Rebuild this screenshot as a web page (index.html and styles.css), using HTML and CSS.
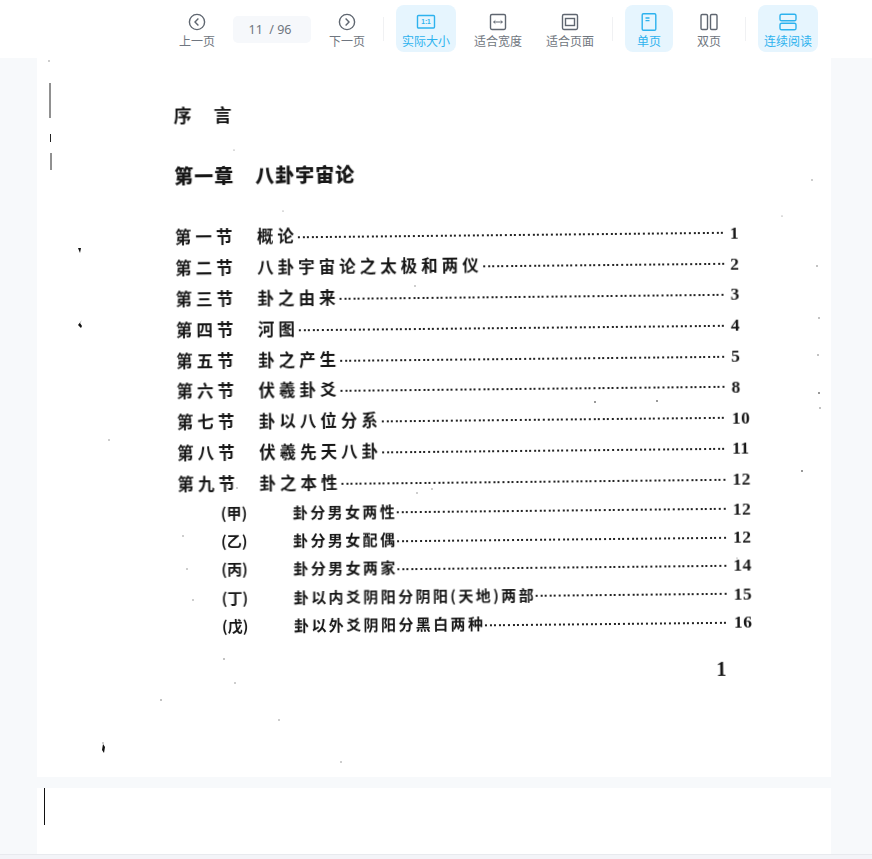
FILE: index.html
```html
<!DOCTYPE html>
<html lang="zh-CN">
<head>
<meta charset="utf-8">
<title>阅读器</title>
<link rel="stylesheet" href="styles.css">
</head>
<body>
<header class="toolbar">
  <button class="tool prev">
    <svg class="icon" viewBox="0 0 20 20"><circle cx="10" cy="10" r="7.6"/><path d="M11.4 6.6 8 10l3.4 3.4"/></svg>
    <span>上一页</span>
  </button>
  <div class="pager">11 &nbsp;/ 96</div>
  <button class="tool next">
    <svg class="icon" viewBox="0 0 20 20"><circle cx="10" cy="10" r="7.6"/><path d="M8.6 6.6 12 10l-3.4 3.4"/></svg>
    <span>下一页</span>
  </button>
  <i class="divider"></i>
  <button class="tool active">
    <svg class="icon" viewBox="0 0 20 20"><rect x="1.5" y="3.5" width="17" height="12.5" rx="1"/><text x="10" y="12.4" class="ratio">1:1</text></svg>
    <span>实际大小</span>
  </button>
  <button class="tool">
    <svg class="icon" viewBox="0 0 20 20"><rect x="2.5" y="2.5" width="15" height="15" rx="1.4"/><path class="thin" d="M5.5 10h9M7.3 8.5 5.7 10l1.6 1.5M12.7 8.5l1.6 1.5-1.6 1.5"/></svg>
    <span>适合宽度</span>
  </button>
  <button class="tool">
    <svg class="icon" viewBox="0 0 20 20"><rect x="2.5" y="2.5" width="15" height="15" rx="1.4"/><rect x="5.5" y="6.5" width="9" height="7"/></svg>
    <span>适合页面</span>
  </button>
  <i class="divider"></i>
  <button class="tool narrow active">
    <svg class="icon" viewBox="0 0 20 20"><rect x="3.2" y="1.8" width="13.6" height="16.4" rx="1.2"/><path d="M6.5 6h4M6.5 8.6h4"/></svg>
    <span>单页</span>
  </button>
  <button class="tool narrow">
    <svg class="icon" viewBox="0 0 20 20"><rect x="2" y="2.5" width="6.5" height="15" rx="1.2"/><rect x="11.5" y="2.5" width="6.5" height="15" rx="1.2"/></svg>
    <span>双页</span>
  </button>
  <i class="divider"></i>
  <button class="tool active">
    <svg class="icon" viewBox="0 0 20 20"><rect x="2" y="2.2" width="16" height="6.6" rx="1.6"/><rect x="2" y="11.2" width="16" height="6.6" rx="1.6"/></svg>
    <span>连续阅读</span>
  </button>
</header>

<main class="viewer">
  <section class="page first">
    <div class="scan">
      <h2 class="preface">序<span class="gap"></span>言</h2>
      <h1 class="chapter"><span class="chapter-no">第一章</span>八卦宇宙论</h1>
      <ol class="sections">
        <li><span class="no">第一节</span><span class="name">概论</span><span class="leader"></span><span class="num">1</span></li>
        <li><span class="no">第二节</span><span class="name">八卦宇宙论之太极和两仪</span><span class="leader"></span><span class="num">2</span></li>
        <li><span class="no">第三节</span><span class="name">卦之由来</span><span class="leader"></span><span class="num">3</span></li>
        <li><span class="no">第四节</span><span class="name">河图</span><span class="leader"></span><span class="num">4</span></li>
        <li><span class="no">第五节</span><span class="name">卦之产生</span><span class="leader"></span><span class="num">5</span></li>
        <li><span class="no">第六节</span><span class="name">伏羲卦爻</span><span class="leader"></span><span class="num">8</span></li>
        <li><span class="no">第七节</span><span class="name">卦以八位分系</span><span class="leader"></span><span class="num">10</span></li>
        <li><span class="no">第八节</span><span class="name">伏羲先天八卦</span><span class="leader"></span><span class="num">11</span></li>
        <li><span class="no">第九节</span><span class="name">卦之本性</span><span class="leader"></span><span class="num">12</span></li>
      </ol>
      <ol class="subsections">
        <li><span class="no">(甲)</span><span class="name">卦分男女两性</span><span class="leader"></span><span class="num">12</span></li>
        <li><span class="no">(乙)</span><span class="name">卦分男女配偶</span><span class="leader"></span><span class="num">12</span></li>
        <li><span class="no">(丙)</span><span class="name">卦分男女两家</span><span class="leader"></span><span class="num">14</span></li>
        <li><span class="no">(丁)</span><span class="name">卦以内爻阴阳分阴阳(天地)两部</span><span class="leader"></span><span class="num">15</span></li>
        <li><span class="no">(戊)</span><span class="name">卦以外爻阴阳分黑白两种</span><span class="leader"></span><span class="num">16</span></li>
      </ol>
      <p class="folio">1</p>
    </div>
    <svg class="specks" viewBox="0 0 794 719">
      <path class="rule" d="M13 25V45M13 45V60M13.5 76V84M14 95V112"/>
      <path class="blot" d="M41 190l3 0-1 5zM45 262l-2 3 2 3-1 2-3-3zM66 686l2 3-1 6-2-3z"/>
      <g class="dust">
        <circle cx="12" cy="3" r=".7"/><circle cx="197" cy="92" r=".6"/><circle cx="246" cy="153" r=".6"/>
        <circle cx="775" cy="122" r=".7"/><circle cx="745" cy="158" r=".6"/><circle cx="780" cy="208" r=".8"/>
        <circle cx="782" cy="260" r=".8"/><circle cx="781" cy="297" r=".8"/><circle cx="782" cy="335" r="1"/>
        <circle cx="783" cy="350" r=".8"/><circle cx="558" cy="344" r="1"/><circle cx="620" cy="343" r="1"/>
        <circle cx="765" cy="413" r="1"/><circle cx="72" cy="382" r=".7"/><circle cx="146" cy="478" r=".7"/>
        <circle cx="156" cy="542" r=".7"/><circle cx="187" cy="601" r=".8"/><circle cx="198" cy="625" r=".7"/>
        <circle cx="124" cy="642" r=".8"/><circle cx="242" cy="662" r=".7"/><circle cx="304" cy="704" r=".7"/>
        <circle cx="66" cy="685" r=".7"/><circle cx="380" cy="435" r=".7"/><circle cx="395" cy="431" r=".7"/>
        <circle cx="378" cy="228" r=".7"/><circle cx="190" cy="427" r=".8"/><circle cx="200" cy="430" r=".7"/>
        <circle cx="150" cy="511" r=".7"/><circle cx="700" cy="500" r=".6"/>
      </g>
    </svg>
  </section>
  <section class="page second">
    <i class="margin-line"></i>
  </section>
</main>
<footer class="statusbar"></footer>
</body>
</html>
```

FILE: styles.css
```css
* { box-sizing: border-box; }
html, body { margin: 0; height: 100%; }
body {
  display: flex;
  flex-direction: column;
  overflow: hidden;
  background: #f7f9fb;
  font-family: "Noto Sans CJK SC", "Noto Sans", sans-serif;
}

.toolbar {
  flex: none;
  height: 58px;
  display: flex;
  align-items: flex-start;
  gap: 12px;
  padding: 5px 0 0 167px;
  background: #fff;
}
.tool {
  width: 60px;
  height: 47px;
  flex: none;
  display: flex;
  flex-direction: column;
  align-items: center;
  padding: 7px 0 0;
  border: 0;
  border-radius: 8px;
  background: transparent;
  color: #6f7680;
  font: 12px/17px "Noto Sans CJK SC", sans-serif;
}
.tool.narrow { width: 48px; }
.tool.active { background: #e6f5fe; color: #2db2ee; }
.icon {
  width: 20px;
  height: 20px;
  fill: none;
  stroke: #5f6670;
  stroke-width: 1.4;
}
.active .icon { stroke: #2db2ee; }
.icon .thin { stroke-width: 1; }
.icon .ratio {
  fill: #2db2ee;
  stroke: none;
  font: 700 6.5px "Liberation Sans", sans-serif;
  text-anchor: middle;
}
.prev, .pager, .next { margin-right: -6px; }
.pager {
  flex: none;
  width: 78px;
  height: 27px;
  margin-top: 11px;
  padding-right: 4px;
  border-radius: 5px;
  background: #f6f8fb;
  color: #6f7680;
  font: 12.5px/27px "Noto Sans", sans-serif;
  text-align: center;
}
.divider {
  flex: none;
  width: 1px;
  height: 24px;
  margin-top: 12px;
  background: #f0f1f3;
}

.viewer {
  flex: 1;
  min-height: 0;
  display: flex;
  flex-direction: column;
  gap: 11px;
  padding: 0 41px 0 37px;
  overflow: hidden;
}
.page { position: relative; flex: none; background: #fff; }
.page.first { height: 719px; }
.page.second { flex: 1; min-height: 0; }
.margin-line {
  position: absolute;
  left: 7px;
  top: 0;
  width: 1px;
  height: 37px;
  background: #111;
}
.statusbar {
  flex: none;
  height: 5px;
  border-top: 1px solid #e8eaee;
  background: #f3f4f8;
}

.scan {
  padding: 46px 0 0 136px;
  width: 711px;
  color: #161616;
  transform-origin: 0 0;
  transform: rotate(-0.6deg);
  filter: blur(0.35px);
}
.preface {
  margin: 0 0 36px;
  font-size: 18px;
  line-height: 24px;
  font-weight: 700;
}
.gap { display: inline-block; width: 22px; }
.chapter {
  margin: 0 0 33px;
  font-size: 19px;
  line-height: 26px;
  font-weight: 900;
  letter-spacing: 1px;
  display: flex;
}
.chapter-no { width: 81px; }
.sections, .subsections { list-style: none; margin: 0; padding: 0; }
.sections li {
  display: flex;
  align-items: center;
  height: 30.8px;
  font-size: 16.5px;
  font-weight: 700;
  letter-spacing: 4px;
}
.sections .no { width: 82px; flex: none; }
.subsections { margin: 0 0 0 43px; }
.subsections li {
  display: flex;
  align-items: center;
  height: 28.3px;
  font-size: 15px;
  font-weight: 700;
  letter-spacing: 2.4px;
}
.subsections .no { width: 72px; flex: none; letter-spacing: 0; }
.leader {
  flex: 1;
  min-width: 0;
  height: 2px;
  margin: 4px 5px 0 0;
  background: repeating-linear-gradient(90deg, #222 0 2px, transparent 2px 4.6px);
}
.num {
  flex: none;
  width: 20px;
  margin-top: 4px;
  font: 700 17.5px "Liberation Serif", serif;
  letter-spacing: 0.5px;
}
.folio {
  margin: 22px 0 0;
  padding-right: 28px;
  text-align: right;
  font: 900 20px/24px "Liberation Serif", serif;
}

.specks {
  position: absolute;
  left: 0;
  top: 0;
  width: 794px;
  height: 719px;
  pointer-events: none;
}
.specks .rule { fill: none; stroke: #222; stroke-width: 1; }
.specks .blot { fill: #111; }
.specks .dust { fill: #777; }
```
